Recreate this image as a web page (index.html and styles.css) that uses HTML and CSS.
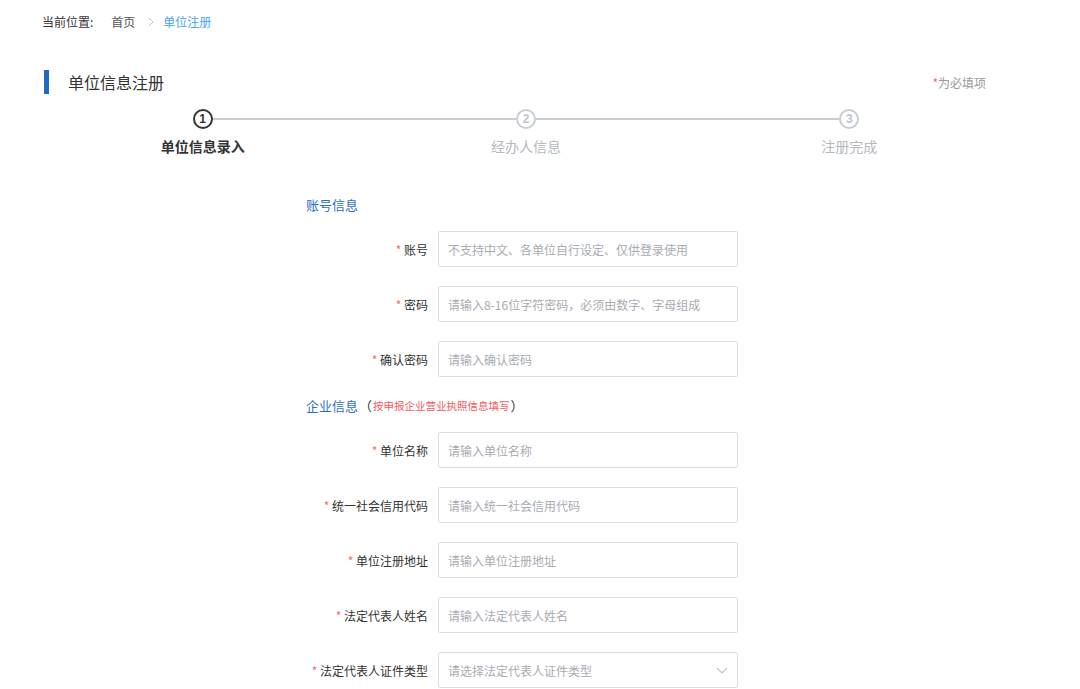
FILE: index.html
```html
<!DOCTYPE html>
<html lang="zh-CN">
<head>
<meta charset="utf-8">
<title>单位信息注册</title>
<link rel="stylesheet" href="styles.css">
</head>
<body>
<div class="page">
  <div class="breadcrumb">
    <span class="bc-label">当前位置:</span>
    <a class="bc-link">首页</a>
    <svg class="bc-sep" width="6" height="10" viewBox="0 0 6 10"><path d="M0.8 0.8 L5 5 L0.8 9.2" fill="none" stroke="#c0c4cc" stroke-width="1"/></svg>
    <span class="bc-current">单位注册</span>
  </div>

  <div class="panel-head">
    <h2 class="title">单位信息注册</h2>
    <span class="req-note"><i class="star">*</i>为必填项</span>
  </div>

  <ol class="steps">
    <li class="step active">
      <span class="step-num">1</span>
      <span class="step-label">单位信息录入</span>
    </li>
    <li class="step">
      <span class="step-num">2</span>
      <span class="step-label">经办人信息</span>
    </li>
    <li class="step last">
      <span class="step-num">3</span>
      <span class="step-label">注册完成</span>
    </li>
  </ol>

  <form class="form">
    <div class="section-title first">账号信息</div>
    <div class="row">
      <label class="label"><i class="star">*</i> 账号</label>
      <input class="input" placeholder="不支持中文、各单位自行设定、仅供登录使用">
    </div>
    <div class="row">
      <label class="label"><i class="star">*</i> 密码</label>
      <input class="input" placeholder="请输入8-16位字符密码，必须由数字、字母组成">
    </div>
    <div class="row">
      <label class="label"><i class="star">*</i> 确认密码</label>
      <input class="input" placeholder="请输入确认密码">
    </div>

    <div class="section-title">企业信息<span class="paren">（</span><span class="hint">按申报企业营业执照信息填写</span><span class="paren">）</span></div>
    <div class="row">
      <label class="label"><i class="star">*</i> 单位名称</label>
      <input class="input" placeholder="请输入单位名称">
    </div>
    <div class="row">
      <label class="label"><i class="star">*</i> 统一社会信用代码</label>
      <input class="input" placeholder="请输入统一社会信用代码">
    </div>
    <div class="row">
      <label class="label"><i class="star">*</i> 单位注册地址</label>
      <input class="input" placeholder="请输入单位注册地址">
    </div>
    <div class="row">
      <label class="label"><i class="star">*</i> 法定代表人姓名</label>
      <input class="input" placeholder="请输入法定代表人姓名">
    </div>
    <div class="row">
      <label class="label"><i class="star">*</i> 法定代表人证件类型</label>
      <div class="input select">
        <span class="select-ph">请选择法定代表人证件类型</span>
        <svg class="chev" width="12" height="7" viewBox="0 0 12 7"><path d="M1 1 L6 6 L11 1" fill="none" stroke="#c0c4cc" stroke-width="1.1"/></svg>
      </div>
    </div>
  </form>
</div>
</body>
</html>
```

FILE: styles.css
```css
* { box-sizing: border-box; }
html, body { margin: 0; padding: 0; background: #fff; }
body {
  font-family: "Microsoft YaHei", "Noto Sans CJK SC", "Noto Sans", sans-serif;
  color: #333;
  font-size: 12px;
}
.page { width: 1080px; height: 689px; overflow: hidden; }

.breadcrumb {
  height: 44px;
  line-height: 44px;
  padding-left: 42px;
  font-size: 12px;
  display: flex;
  align-items: center;
}
.bc-label { color: #333; }
.bc-link { color: #555; margin-left: 18px; }
.bc-sep { display: block; margin: 0 9px 0 13px; }
.bc-current { color: #4a9ff5; }

.panel-head {
  margin: 26px 94px 0 44px;
  height: 24px;
  display: flex;
  align-items: center;
  justify-content: space-between;
  border-left: 5px solid #1d6cc4;
}
.title {
  margin: 0 0 0 19px;
  font-size: 16px;
  font-weight: normal;
  color: #333;
  line-height: 24px;
}
.req-note { font-size: 12px; color: #999; }
.star { font-style: normal; color: #f56c6c; }

.steps {
  list-style: none;
  margin: 15px 0 0 41px;
  padding: 0;
  width: 970px;
  display: grid;
  grid-template-columns: repeat(3, 1fr);
}
.step {
  position: relative;
  display: flex;
  flex-direction: column;
  align-items: center;
}
.step::after {
  content: "";
  position: absolute;
  top: 9px;
  left: calc(50% + 10px);
  width: calc(100% - 20px);
  height: 2px;
  background: #c9ccd2;
}
.step.last::after { display: none; }
.step-num {
  width: 20px;
  height: 20px;
  border-radius: 50%;
  border: 2px solid #c9ccd2;
  color: #c0c4cc;
  font-size: 12px;
  font-weight: bold;
  line-height: 16px;
  text-align: center;
  font-family: "Liberation Sans", "Noto Sans", sans-serif;
}
.step-label {
  margin-top: 7px;
  line-height: 20px;
  font-size: 14px;
  color: #b4b8bf;
}
.step.active .step-num { border-color: #333; color: #333; }
.step.active .step-label { color: #333; font-weight: bold; }

.form { margin-left: 306px; }
.section-title {
  font-size: 13px;
  line-height: 20px;
  color: #2c6fbf;
  margin: 15px 0 16px;
  display: flex;
  align-items: center;
}
.section-title.first { margin-top: 39px; }
.paren { color: #333; font-size: 13px; margin: 0 1px; }
.hint { color: #f25a5c; font-size: 10.5px; }

.row {
  display: flex;
  align-items: center;
  height: 36px;
  margin-bottom: 19px;
}
.label {
  width: 122px;
  margin-right: 10px;
  text-align: right;
  white-space: nowrap;
  font-size: 12px;
  color: #333;
}
.input {
  width: 300px;
  height: 36px;
  border: 1px solid #dcdfe6;
  border-radius: 2px;
  padding: 0 9px;
  font-family: inherit;
  font-size: 12px;
  color: #333;
  outline: none;
  background: #fff;
}
.input::placeholder { color: #a8abb2; }
.select {
  display: flex;
  align-items: center;
  justify-content: space-between;
  padding-right: 9px;
}
.select-ph { color: #a8abb2; }
.chev { display: block; }
```
